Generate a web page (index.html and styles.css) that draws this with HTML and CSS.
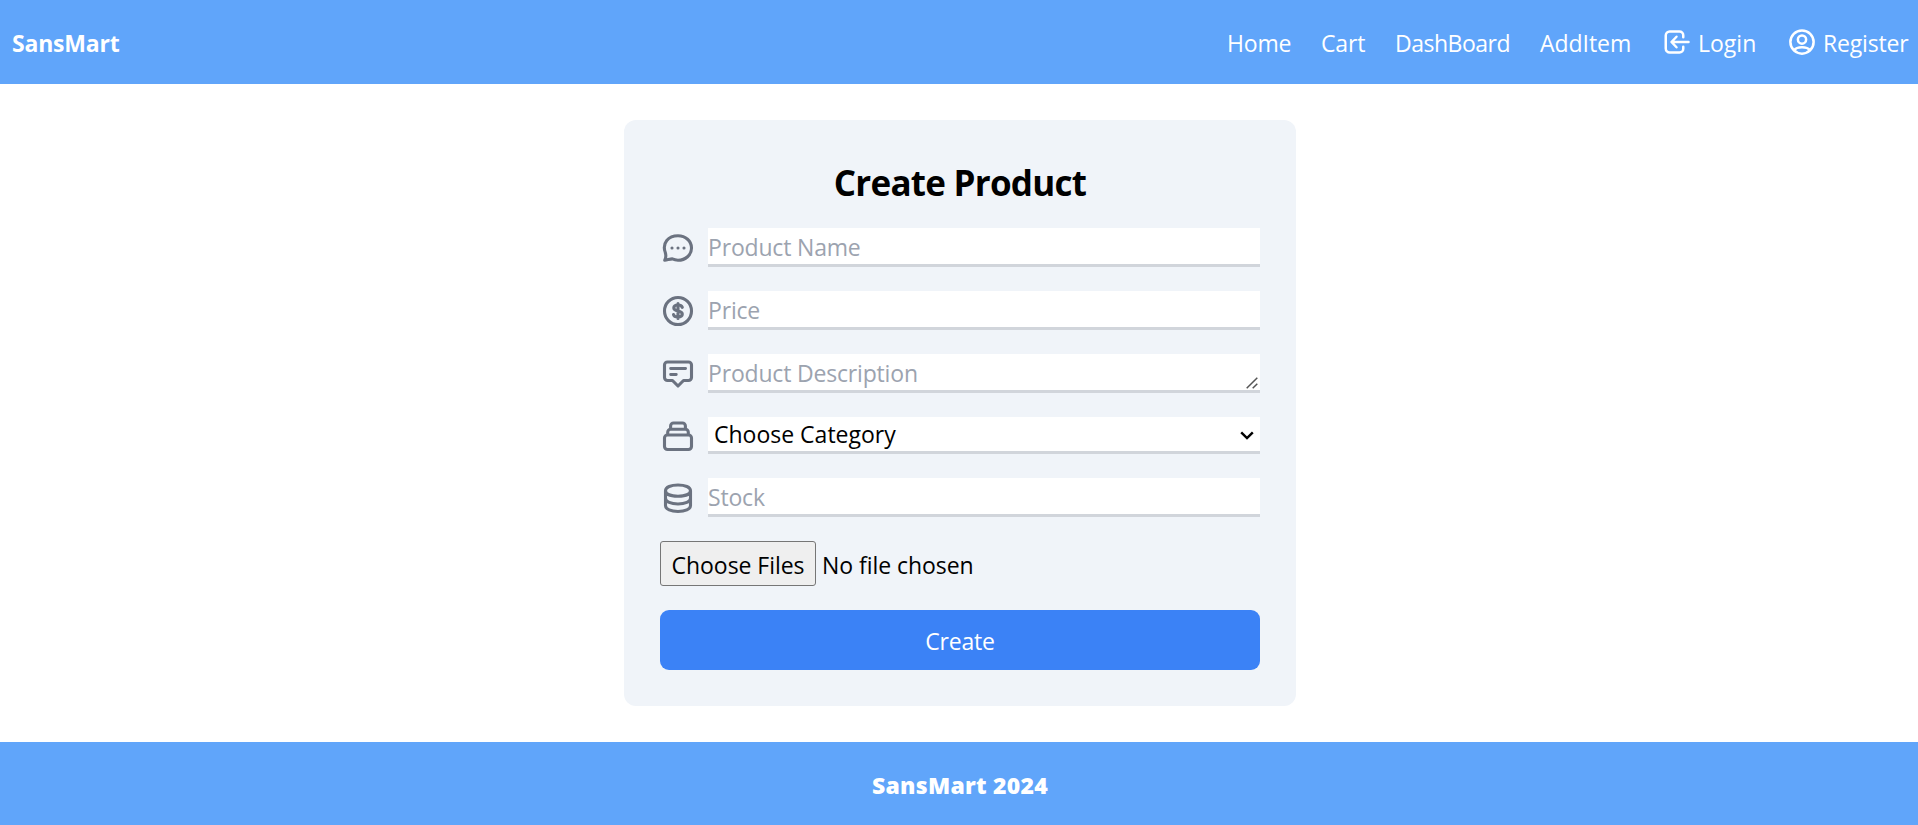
FILE: index.html
```html
<!DOCTYPE html>
<html lang="en">
<head>
<meta charset="utf-8">
<title>SansMart</title>
<link rel="stylesheet" href="styles.css">
</head>
<body>
<header class="navbar">
  <a class="brand">SansMart</a>
  <nav class="links">
    <a class="link home">Home</a>
    <a class="link cart">Cart</a>
    <a class="link dash">DashBoard</a>
    <a class="link add">AddItem</a>
    <a class="link login"><svg class="nav-icon" viewBox="0 0 24 24"><path d="M17 8.2V6.6A3 3 0 0 0 14 3.6H6.2A3.2 3.2 0 0 0 3 6.8v10.4a3.2 3.2 0 0 0 3.2 3.2H14a3 3 0 0 0 3-3v-1.6M21.2 12H8.6M11.6 7.8 7.6 12l4 4.200"/></svg><span>Login</span></a>
    <a class="link register"><svg class="nav-icon" viewBox="0 0 24 24"><circle cx="12" cy="12" r="9.300"/><circle cx="12" cy="10" r="3.300"/><path d="M5.600 18.600C7.200 16.400 9.500 16.200 12 16.200s4.800.2 6.400 2.400"/></svg><span>Register</span></a>
  </nav>
</header>
<main class="page">
  <form class="card">
    <h1 class="title">Create Product</h1>
    <div class="row">
      <svg class="icon" viewBox="0 0 36 36"><path d="M4.700 30.200C6.300 27.500 6 25 5.300 22.500 1.800 13 8.500 5.800 18 5.800c7.500 0 13.500 5.200 13.500 12.200S25.500 30.200 18 30.200c-2.200 0-4-.5-5.700-1.300-2 .1-4.800.9-7.600 1.300z"/><path d="M12 18h.01M18 18h.01M24 18h.01"/></svg>
      <input class="field" type="text" placeholder="Product Name">
    </div>
    <div class="row">
      <svg class="icon" viewBox="0 0 36 36"><circle cx="18" cy="18" r="13.500"/><path d="M22.300 14.300c-.6-1.500-2.200-2.300-4.300-2.300-2.500 0-4.200 1.200-4.200 3s1.600 2.500 4.200 3c2.700.5 4.300 1.200 4.300 3.100S20.500 24 18 24s-4.100-.8-4.500-2.400M18 10.500v15"/></svg>
      <input class="field" type="text" placeholder="Price">
    </div>
    <div class="row">
      <svg class="icon" viewBox="0 0 36 36"><path d="M7.500 6h21a3 3 0 0 1 3 3v12.500a3 3 0 0 1-3 3h-5L18 30l-5.500-5.500h-5a3 3 0 0 1-3-3V9a3 3 0 0 1 3-3z"/><path class="thin" d="M10.600 12.500h15M10.600 18.500h5.700"/></svg>
      <textarea class="field area" rows="1" placeholder="Product Description"></textarea>
      <svg class="grip" viewBox="0 0 12 12"><path d="M.7 11.300 11.300.7M6.700 11.300l4.600-4.600"/></svg>
    </div>
    <div class="row select-row">
      <svg class="icon" viewBox="0 0 36 36"><path d="M7.500 17h21a3 3 0 0 1 3 3v8.500a3 3 0 0 1-3 3h-21a3 3 0 0 1-3-3V20a3 3 0 0 1 3-3zM7.700 17v-2.800a3 3 0 0 1 3-3h14.600a3 3 0 0 1 3 3V17M10.600 11.200V8a3 3 0 0 1 3-3h8.800a3 3 0 0 1 3 3v3.200"/></svg>
      <select class="field"><option>Choose Category</option></select>
      <svg class="chevron" viewBox="0 0 14 9"><path d="m1.200 1.300 5.800 5.800 5.800-5.800"/></svg>
    </div>
    <div class="row">
      <svg class="icon" viewBox="0 0 36 36"><path d="M5.500 10.700C5.500 7.100 11 5 18 5s12.500 2.100 12.500 5.700S25 16.200 18 16.200 5.500 14.300 5.500 10.700zM5.500 10.700v15c0 3.600 5.500 5.800 12.500 5.800s12.500-2.200 12.500-5.800v-15M5.500 18.200c0 3.600 5.500 5.800 12.500 5.800s12.500-2.200 12.500-5.800"/></svg>
      <input class="field" type="text" placeholder="Stock">
    </div>
    <input class="files" type="file" multiple>
    <button class="create" type="button">Create</button>
  </form>
</main>
<footer class="footer"><span>SansMart 2024</span></footer>
</body>
</html>
```
FILE: styles.css
```css
* { box-sizing: border-box; }
body {
  margin: 0;
  height: 825px;
  display: flex;
  flex-direction: column;
  overflow: hidden;
  background: #fff;
  color: #000;
  font: 23px/36px "Open Sans", "Noto Sans", sans-serif;
  letter-spacing: -0.18px;
}
.navbar {
  height: 84px;
  flex: none;
  display: flex;
  align-items: center;
  justify-content: space-between;
  padding: 2px 8px 0 12px;
  background: #60a5fa;
  color: #fff;
}
.brand { font-weight: 700; letter-spacing: -0.2px; }
.links { display: flex; gap: 30px; }
.link { display: flex; align-items: center; gap: 6px; white-space: nowrap; }
.home { width: 64px; }
.cart { width: 44px; }
.dash { width: 115px; letter-spacing: -0.5px; }
.add { width: 92px; letter-spacing: -0.05px; }
.login { width: 95px; letter-spacing: 0; }
.register { width: 123px; }
.nav-icon {
  width: 30px;
  height: 30px;
  flex: none;
  margin-top: -2px;
  fill: none;
  stroke: #fff;
  stroke-width: 2;
  stroke-linecap: round;
  stroke-linejoin: round;
}
.page { flex: none; padding: 36px 0; display: flex; justify-content: center; }
.card {
  width: 672px;
  height: 586px;
  margin-left: 2px;
  padding: 36px;
  border-radius: 12px;
  background: #f0f4f9;
  display: flex;
  flex-direction: column;
  gap: 24px;
}
.title { margin: 0; height: 48px; font-size: 35px; font-weight: 700; line-height: 53px; text-align: center; letter-spacing: -0.75px; }
.row { position: relative; height: 39px; display: flex; align-items: center; gap: 12px; }
.select-row { height: 37px; }
.icon {
  width: 36px;
  height: 36px;
  flex: none;
  fill: none;
  stroke: #6b7280;
  stroke-width: 3.100;
  stroke-linecap: round;
  stroke-linejoin: round;
}
.thin { stroke-width: 2.800; }
.field {
  flex: 1;
  min-width: 0;
  height: 100%;
  margin: 0;
  padding: 2px 0 0;
  border: 0;
  border-bottom: 3px solid #d1d5db;
  border-radius: 0;
  background: #fff;
  color: #000;
  font: inherit;
  letter-spacing: inherit;
  outline: none;
}
.field::placeholder { color: #9ca3af; }
.area { padding-top: 1px; overflow: hidden; resize: none; }
select.field { padding: 1px 6px 0; appearance: none; line-height: 33px; letter-spacing: 0; }
/* Handles drawn over the field's right edge */
.grip {
  position: absolute;
  right: 2px;
  bottom: 4px;
  width: 12px;
  height: 12px;
  fill: none;
  stroke: #555;
  stroke-width: 1.500;
}
.chevron {
  position: absolute;
  right: 6px;
  top: 14px;
  width: 14px;
  height: 9px;
  fill: none;
  stroke: #000;
  stroke-width: 2.400;
}
.files { height: 45px; width: 600px; font: inherit; letter-spacing: -0.05px; }
.files::file-selector-button {
  width: 156px;
  height: 45px;
  margin: 0 6px 0 0;
  padding: 2px 0 0;
  border: 1px solid #767676;
  border-radius: 3px;
  background: #efefef;
  color: #000;
  font: inherit;
  letter-spacing: inherit;
}
.create {
  height: 60px;
  padding: 2px 0 0;
  border: 0;
  border-radius: 9px;
  background: #3b82f6;
  color: #fff;
  font: inherit;
  letter-spacing: inherit;
}
.footer {
  height: 84px;
  flex: none;
  padding-top: 25px;
  padding-left: 2px;
  background: #60a5fa;
  color: #fff;
  font-weight: 800;
  letter-spacing: 0.25px;
  text-align: center;
}
```
